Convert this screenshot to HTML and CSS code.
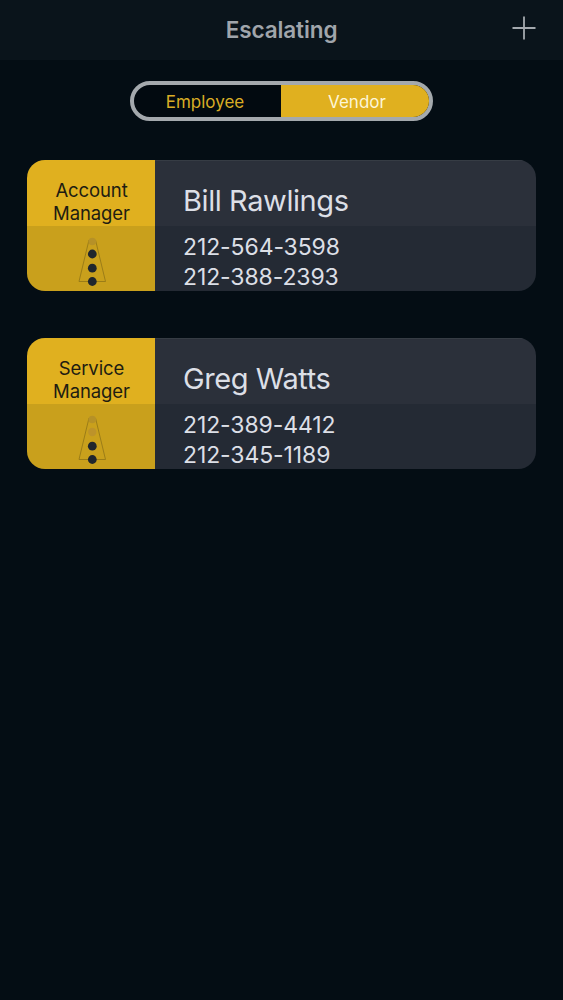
FILE: index.html
```html
<!DOCTYPE html>
<html lang="en">
<head>
    <meta charset="UTF-8">
    <meta name="viewport" content="width=device-width, initial-scale=1.0">
    <title>Escalating</title>
    <link rel="stylesheet" href="styles.css">
</head>
<body>
    <header class="navbar">
        <h1>Escalating</h1>
        <button class="add" aria-label="Add">
            <svg width="24" height="24" viewBox="0 0 24 24">
                <path d="M12 0.5V23.5M0.5 12H23.5" stroke="#a4a9ae" stroke-width="1.8" fill="none"/>
            </svg>
        </button>
    </header>

    <div class="segments">
        <button class="segment">Employee</button>
        <button class="segment selected">Vendor</button>
    </div>

    <main class="contacts">
        <section class="card">
            <div class="role">
                <p>Account<br>Manager</p>
                <svg class="level" width="30" height="50" viewBox="0 0 30 50">
                    <path d="M12 3L2 44.5H28.5L18.5 3" fill="none" stroke="#8f7416" stroke-width="0.8"/>
                    <circle cx="15.3" cy="4.5" r="3.8" fill="#b69127"/>
                    <circle cx="15.3" cy="17" r="4.4" fill="#20262d"/>
                    <circle cx="15.3" cy="31.2" r="4.4" fill="#20262d"/>
                    <circle cx="15.3" cy="44.5" r="4.4" fill="#20262d"/>
                </svg>
            </div>
            <div class="details">
                <h2>Bill Rawlings</h2>
                <p>212-564-3598</p>
                <p>212-388-2393</p>
            </div>
        </section>

        <section class="card">
            <div class="role">
                <p>Service<br>Manager</p>
                <svg class="level" width="30" height="50" viewBox="0 0 30 50">
                    <path d="M12 3L2 44.5H28.5L18.5 3" fill="none" stroke="#8f7416" stroke-width="0.8"/>
                    <circle cx="15.3" cy="4.5" r="3.8" fill="#b69127"/>
                    <circle cx="15.3" cy="17" r="4.2" fill="#bd932a"/>
                    <circle cx="15.3" cy="31.2" r="4.4" fill="#20262d"/>
                    <circle cx="15.3" cy="44.5" r="4.4" fill="#20262d"/>
                </svg>
            </div>
            <div class="details">
                <h2>Greg Watts</h2>
                <p>212-389-4412</p>
                <p>212-345-1189</p>
            </div>
        </section>
    </main>
</body>
</html>
```

FILE: styles.css
```css
* {
    box-sizing: border-box;
}

body {
    margin: 0;
    min-height: 100vh;
    background-color: #040d14;
    font-family: Inter, "Liberation Sans", sans-serif;
    color: #dcdfe6;
}

h1, h2, p {
    margin: 0;
    font-weight: 400;
}

button {
    border: none;
    padding: 0;
    background: none;
    font-family: inherit;
}

.navbar {
    display: grid;
    grid-template-columns: 1fr auto 1fr;
    align-items: center;
    height: 60px;
    padding: 0 27px;
    background-color: #0a141b;
}

.navbar h1 {
    grid-column: 2;
    margin-bottom: 1px;
    font-size: 22.5px;
    font-weight: 600;
    letter-spacing: -0.1px;
    color: #a0a5ab;
}

.add {
    justify-self: end;
    height: 24px;
    margin-bottom: 4px;
}

.add svg {
    display: block;
}

.segments {
    display: flex;
    width: 303px;
    height: 40px;
    margin: 21px auto 0 130px;
    border: 4px solid #a4a9ad;
    border-radius: 20px;
    overflow: hidden;
    background-color: #020a10;
}

.segment {
    width: 147px;
    padding: 1px 5px 0 0;
    font-size: 17px;
    color: #d9ad25;
}

.segment.selected {
    flex: 1;
    padding: 1px 0 0 4px;
    background-color: #e0b01f;
    color: #fdf6d8;
}

.contacts {
    display: flex;
    flex-direction: column;
    gap: 47px;
    padding: 39px 27px 0;
}

.card {
    display: flex;
    height: 131px;
    border-radius: 18px;
    overflow: hidden;
}

.role {
    display: flex;
    flex-direction: column;
    align-items: center;
    width: 128px;
    padding: 19px 0 0 1px;
    background: linear-gradient(#e0b01f 66px, #c9a01c 66px);
    font-size: 18.5px;
    line-height: 23px;
    letter-spacing: -0.1px;
    text-align: center;
    color: #201c12;
}

.level {
    margin-top: 12px;
}

.details {
    flex: 1;
    padding: 21px 28px 0;
    background: linear-gradient(#2b303a 66px, #242a34 66px);
    box-shadow: inset 0 1px #363c44;
}

.details h2 {
    margin-bottom: 11px;
    font-size: 29px;
    line-height: 40px;
    letter-spacing: -0.42px;
}

.details p {
    font-size: 23px;
    line-height: 30px;
    letter-spacing: -0.1px;
}
```
